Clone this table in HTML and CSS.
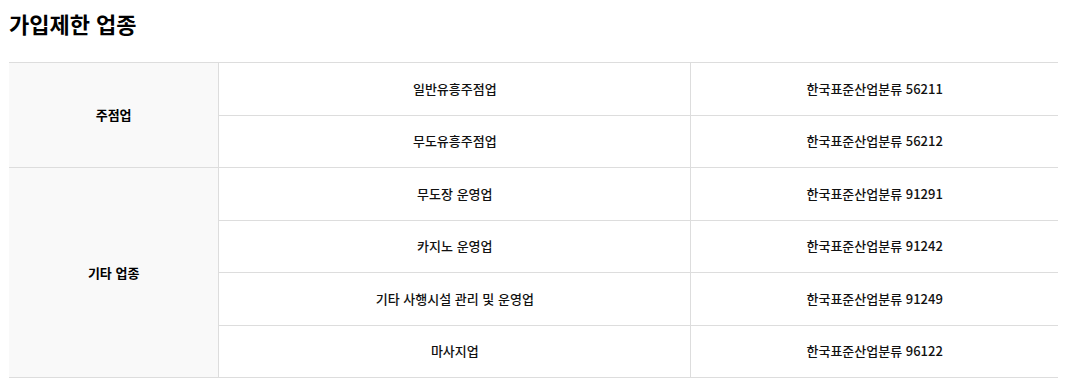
FILE: index.html
```html
<!DOCTYPE html>
<html lang="ko">
<head>
<meta charset="utf-8">
<link rel="stylesheet" href="styles.css">
</head>
<body>
<div class="wrap">
  <h2 class="title">가입제한 업종</h2>
  <table class="tbl">
    <colgroup>
      <col class="c1"><col class="c2"><col class="c3">
    </colgroup>
    <tbody>
      <tr><th rowspan="2">주점업</th><td>일반유흥주점업</td><td>한국표준산업분류 56211</td></tr>
      <tr><td>무도유흥주점업</td><td>한국표준산업분류 56212</td></tr>
      <tr><th rowspan="4">기타 업종</th><td>무도장 운영업</td><td>한국표준산업분류 91291</td></tr>
      <tr><td>카지노 운영업</td><td>한국표준산업분류 91242</td></tr>
      <tr><td>기타 사행시설 관리 및 운영업</td><td>한국표준산업분류 91249</td></tr>
      <tr><td>마사지업</td><td>한국표준산업분류 96122</td></tr>
    </tbody>
  </table>
</div>
</body>
</html>
```
FILE: styles.css
```css
html, body { margin: 0; padding: 0; background: #fff; }
body { font-family: "Noto Sans CJK KR", "Noto Sans", sans-serif; color: #111; }
.wrap { padding: 0 11px 0 9px; }
.title { margin: 0; padding-top: 8px; font-size: 22px; font-weight: 700; line-height: 30px; height: 62px; box-sizing: border-box; color: #000; }
.tbl { width: 100%; border-collapse: collapse; table-layout: fixed; border-top: 1px solid #ddd; border-bottom: 1px solid #ddd; }
.c1 { width: 20%; }
.c2 { width: 45%; }
.c3 { width: 35%; }
.tbl th, .tbl td { height: 51.5px; padding: 0; text-align: center; vertical-align: middle; font-size: 13px; border-bottom: 1px solid #ddd; line-height: 18px; }
.tbl th { background: #f9f9f9; font-weight: 700; border-right: 1px solid #ddd; color: #000; }
.tbl td { font-weight: 500; color: #111; }
.tbl td + td { border-left: 1px solid #ddd; }
```
